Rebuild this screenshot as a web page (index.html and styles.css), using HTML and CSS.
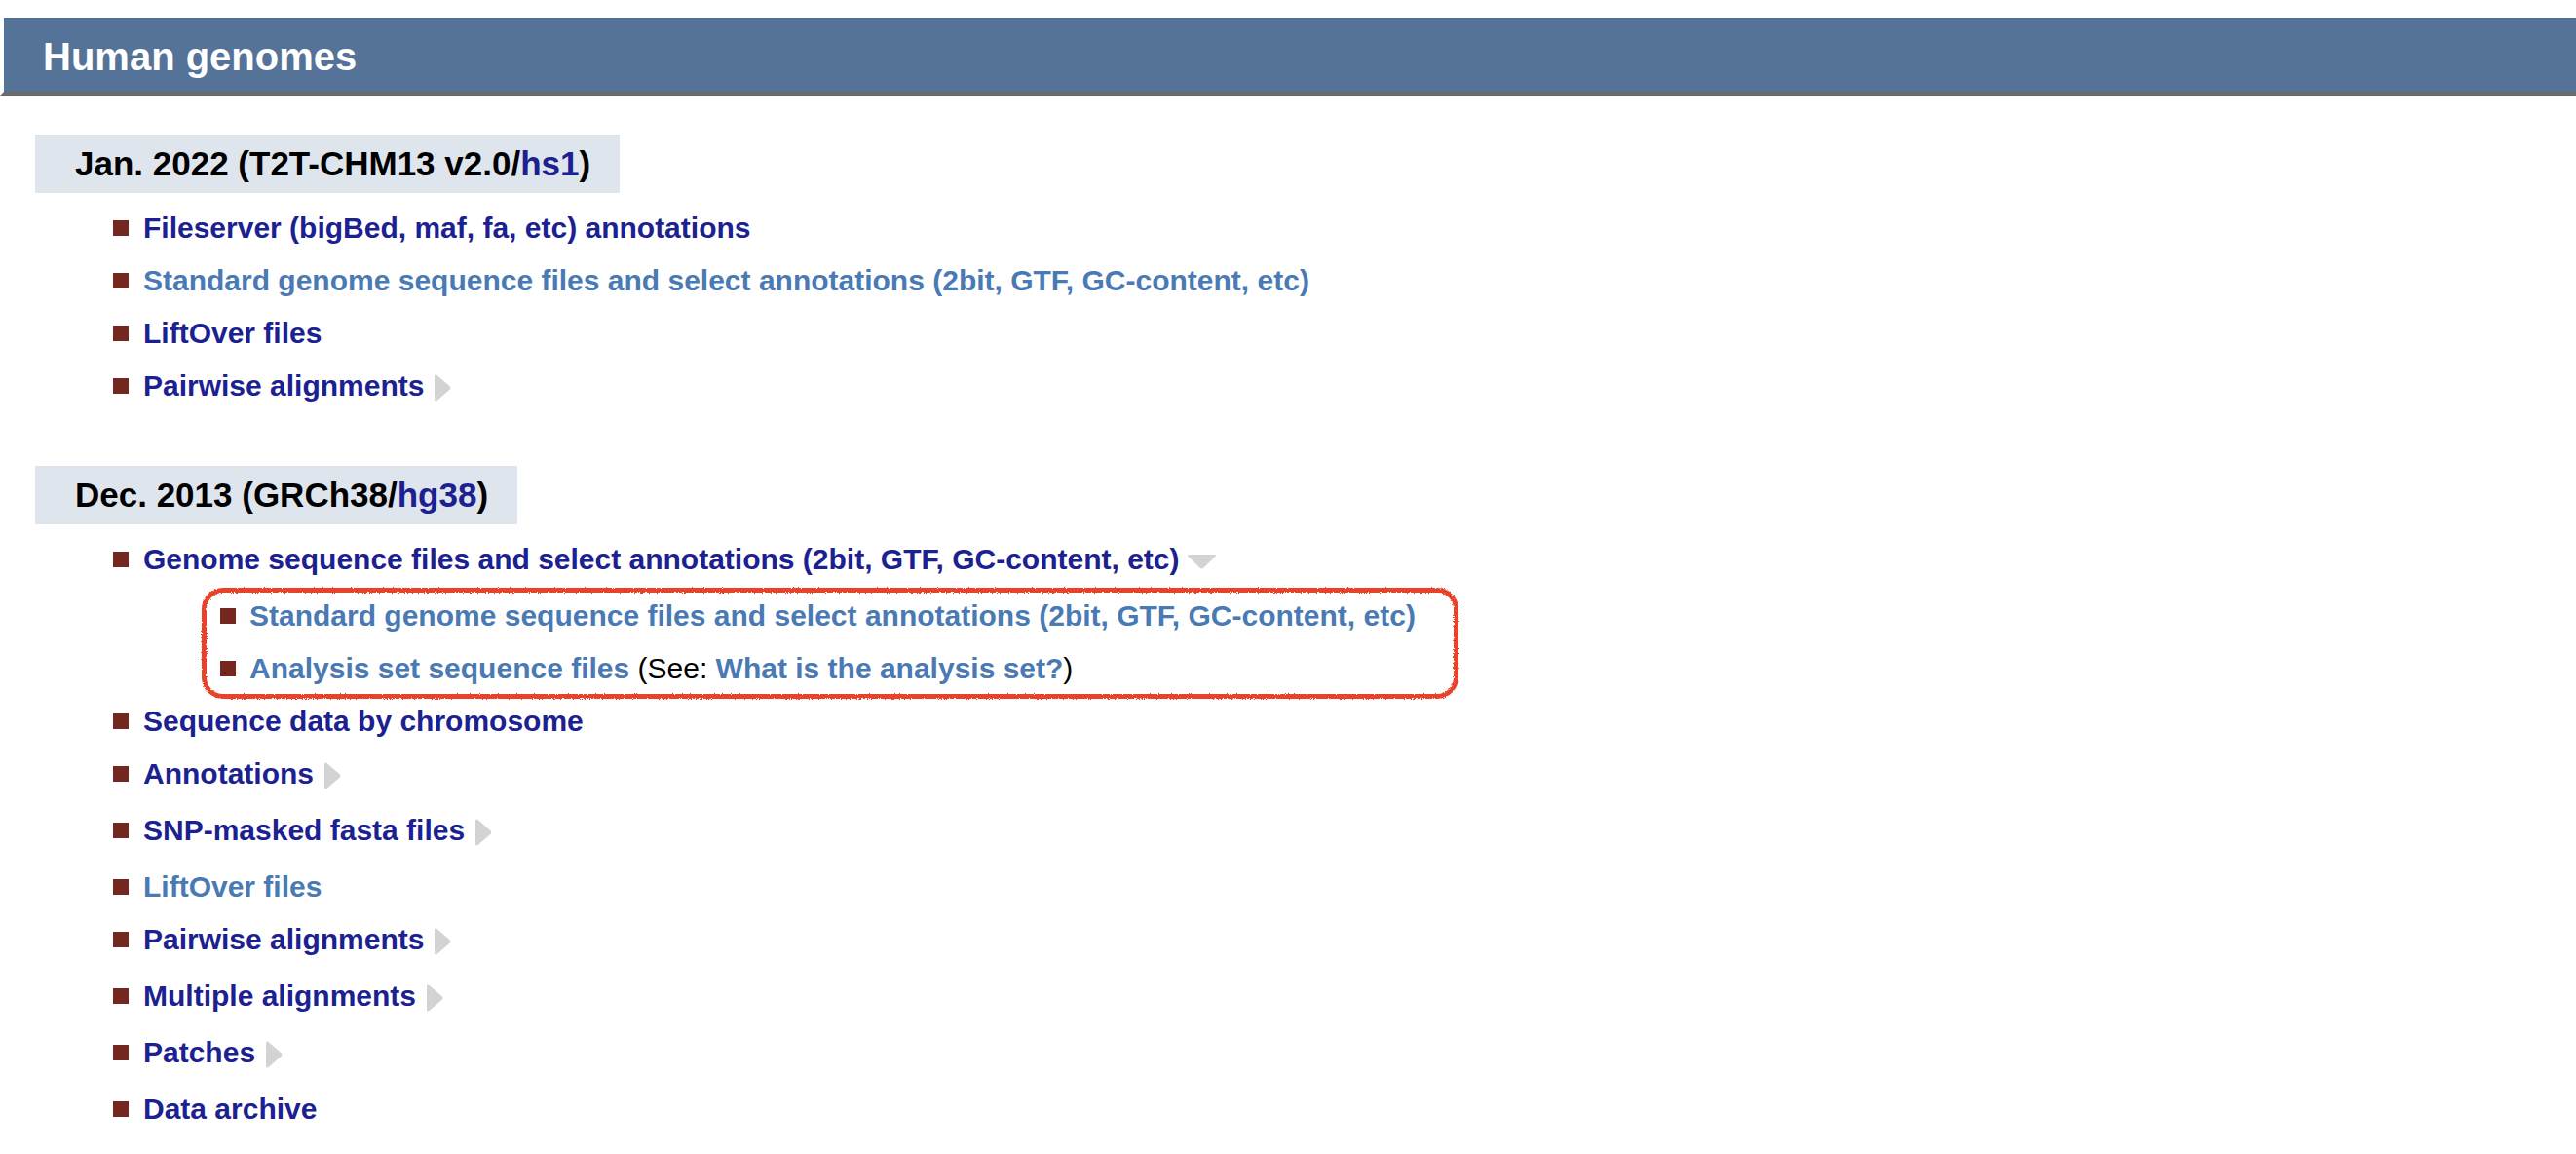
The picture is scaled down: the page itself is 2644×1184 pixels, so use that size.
FILE: index.html
```html
<!DOCTYPE html>
<html lang="en">
<head>
<meta charset="utf-8">
<title>Human genomes</title>
<link rel="stylesheet" href="styles.css">
</head>
<body>
<svg class="defs" width="0" height="0" aria-hidden="true">
  <filter id="rough" x="-5%" y="-20%" width="110%" height="140%">
    <feTurbulence type="fractalNoise" baseFrequency="0.9" numOctaves="2" seed="3" result="noise"/>
    <feDisplacementMap in="SourceGraphic" in2="noise" scale="3" xChannelSelector="R" yChannelSelector="G"/>
  </filter>
</svg>
<div class="banner">Human genomes</div>

<div class="content">
  <section class="assembly">
    <h2 class="asm-title">Jan. 2022 (T2T-CHM13 v2.0/<a class="dark" href="#">hs1</a>)</h2>
    <ul class="links">
      <li><a class="dark" href="#">Fileserver (bigBed, maf, fa, etc) annotations</a></li>
      <li><a class="light" href="#">Standard genome sequence files and select annotations (2bit, GTF, GC-content, etc)</a></li>
      <li><a class="dark" href="#">LiftOver files</a></li>
      <li class="more"><a class="dark" href="#">Pairwise alignments</a><svg class="arrow-right" viewBox="0 0 17 28" width="17" height="28"><path d="M2 0.6 Q0 0 0 2.5 L0 25.5 Q0 28 2 27.4 L15.8 15.6 Q17 14 15.8 12.4 Z"/></svg></li>
    </ul>
  </section>

  <section class="assembly second">
    <h2 class="asm-title">Dec. 2013 (GRCh38/<a class="dark" href="#">hg38</a>)</h2>
    <ul class="links">
      <li class="open"><a class="dark" href="#">Genome sequence files and select annotations (2bit, GTF, GC-content, etc)</a><svg class="arrow-down" viewBox="0 0 31 15" width="31" height="15"><path d="M2.5 0 L28.5 0 Q31 0 29.6 1.8 L17.2 13.8 Q15.5 15.4 13.8 13.8 L1.4 1.8 Q0 0 2.5 0 Z"/></svg>
        <ul class="links sub">
          <li><a class="light" href="#">Standard genome sequence files and select annotations (2bit, GTF, GC-content, etc)</a></li>
          <li><a class="light" href="#">Analysis set sequence files</a><span class="note"> (See: </span><a class="light" href="#">What is the analysis set?</a><span class="note">)</span></li>
        </ul>
      </li>
      <li><a class="dark" href="#">Sequence data by chromosome</a></li>
      <li class="more"><a class="dark" href="#">Annotations</a><svg class="arrow-right" viewBox="0 0 17 28" width="17" height="28"><path d="M2 0.6 Q0 0 0 2.5 L0 25.5 Q0 28 2 27.4 L15.8 15.6 Q17 14 15.8 12.4 Z"/></svg></li>
      <li class="more"><a class="dark" href="#">SNP-masked fasta files</a><svg class="arrow-right" viewBox="0 0 17 28" width="17" height="28"><path d="M2 0.6 Q0 0 0 2.5 L0 25.5 Q0 28 2 27.4 L15.8 15.6 Q17 14 15.8 12.4 Z"/></svg></li>
      <li><a class="light" href="#">LiftOver files</a></li>
      <li class="more"><a class="dark" href="#">Pairwise alignments</a><svg class="arrow-right" viewBox="0 0 17 28" width="17" height="28"><path d="M2 0.6 Q0 0 0 2.5 L0 25.5 Q0 28 2 27.4 L15.8 15.6 Q17 14 15.8 12.4 Z"/></svg></li>
      <li class="more"><a class="dark" href="#">Multiple alignments</a><svg class="arrow-right" viewBox="0 0 17 28" width="17" height="28"><path d="M2 0.6 Q0 0 0 2.5 L0 25.5 Q0 28 2 27.4 L15.8 15.6 Q17 14 15.8 12.4 Z"/></svg></li>
      <li class="more"><a class="dark" href="#">Patches</a><svg class="arrow-right" viewBox="0 0 17 28" width="17" height="28"><path d="M2 0.6 Q0 0 0 2.5 L0 25.5 Q0 28 2 27.4 L15.8 15.6 Q17 14 15.8 12.4 Z"/></svg></li>
      <li><a class="dark" href="#">Data archive</a></li>
    </ul>
  </section>
</div>
</body>
</html>
```

FILE: styles.css
```css
html, body {
  margin: 0;
  padding: 0;
  background: #ffffff;
}

body {
  font-family: "Liberation Sans", Arial, Helvetica, sans-serif;
  color: #000000;
}

.defs {
  display: block;
  width: 0;
  height: 0;
  overflow: hidden;
}

.banner {
  margin-top: 18px;
  height: 72px;
  padding: 4px 0 0 40px;
  line-height: 72px;
  font-size: 40px;
  font-weight: bold;
  color: #ffffff;
  background: #557398;
  border-left: 4px solid #ffffff;
  border-bottom: 4px solid #6b6b6b;
}

.content {
  padding-left: 36px;
}

.assembly {
  margin-top: 40px;
}

.assembly.second {
  margin-top: 51px;
}

.asm-title {
  display: inline-block;
  margin: 0;
  height: 60px;
  padding: 0 30px 0 41px;
  line-height: 60px;
  font-size: 35px;
  font-weight: bold;
  background: #dfe5ed;
  color: #000000;
}

.links {
  list-style: none;
  margin: 9px 0 0 0;
  padding: 0 0 0 80px;
}

.links li {
  line-height: 54px;
  font-size: 30px;
  white-space: nowrap;
}

.links li::before {
  content: "";
  display: inline-block;
  width: 16px;
  height: 16px;
  margin-right: 15px;
  vertical-align: 2px;
  background: #73271f;
}

.links li.more {
  padding-bottom: 4px;
}

.links.sub {
  position: relative;
  margin: 4px 0 0 0;
  padding-left: 110px;
}

.links.sub::after {
  content: "";
  position: absolute;
  left: 91px;
  top: -2px;
  width: 1290px;
  height: 114px;
  box-sizing: border-box;
  border: 5px solid #e8432b;
  border-radius: 22px;
  filter: url(#rough);
  pointer-events: none;
}

.links.sub li::before {
  margin-right: 14px;
}

a {
  font-weight: bold;
  text-decoration: none;
}

a.dark {
  color: #1b2190;
}

a.light {
  color: #4a7ab4;
}

.note {
  font-weight: normal;
  color: #000000;
}

.arrow-right {
  margin-left: 11px;
  vertical-align: -6px;
  fill: #d3d3d3;
}

.arrow-down {
  margin-left: 7px;
  vertical-align: 0;
  fill: #d3d3d3;
}
```
